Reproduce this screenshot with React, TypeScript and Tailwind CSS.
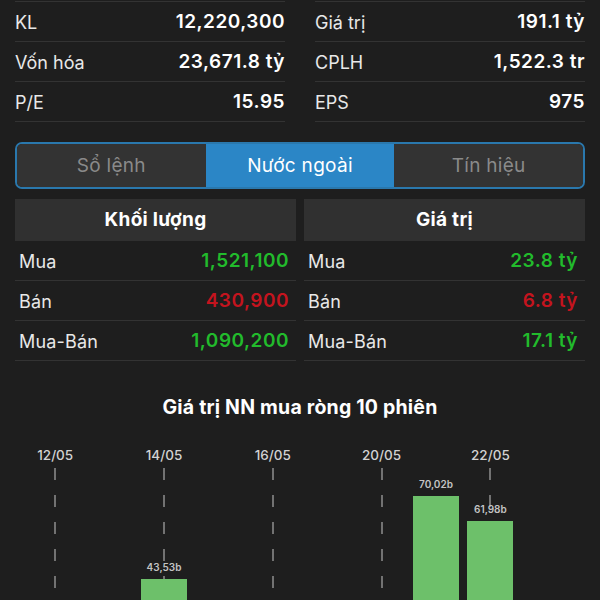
import React from "react";

const STATS: [string, string][][] = [
  [
    ["KL", "12,220,300"],
    ["Vốn hóa", "23,671.8 tỷ"],
    ["P/E", "15.95"],
  ],
  [
    ["Giá trị", "191.1 tỷ"],
    ["CPLH", "1,522.3 tr"],
    ["EPS", "975"],
  ],
];

const TABS = ["Sổ lệnh", "Nước ngoài", "Tín hiệu"];

type Row = { label: string; value: string; tone: "up" | "down" };

const VOLUME: Row[] = [
  { label: "Mua", value: "1,521,100", tone: "up" },
  { label: "Bán", value: "430,900", tone: "down" },
  { label: "Mua-Bán", value: "1,090,200", tone: "up" },
];

const VALUE: Row[] = [
  { label: "Mua", value: "23.8 tỷ", tone: "up" },
  { label: "Bán", value: "6.8 tỷ", tone: "down" },
  { label: "Mua-Bán", value: "17.1 tỷ", tone: "up" },
];

// 10 sessions, net foreign buy value (billion); null = bar sits below the fold
const SESSIONS: { date: string; value: number | null; grid: boolean }[] = [
  { date: "12/05", value: null, grid: true },
  { date: "13/05", value: null, grid: false },
  { date: "14/05", value: 43.53, grid: true },
  { date: "15/05", value: null, grid: false },
  { date: "16/05", value: null, grid: true },
  { date: "19/05", value: null, grid: false },
  { date: "20/05", value: null, grid: true },
  { date: "21/05", value: 70.02, grid: false },
  { date: "22/05", value: 61.98, grid: true },
  { date: "23/05", value: null, grid: false },
];

const PX_PER_B = 3.14;

function StatColumn({ rows }: { rows: [string, string][] }) {
  return (
    <div className="border-t border-[#333333]">
      {rows.map(([label, value]) => (
        <div
          key={label}
          className="h-[40px] pt-[2px] flex items-center justify-between border-b border-[#333333]"
        >
          <span className="text-[18px] text-[#e8e8e8]">{label}</span>
          <span className="text-[19px] font-semibold text-white tracking-[0.5px]">{value}</span>
        </div>
      ))}
    </div>
  );
}

function FlowTable({ title, rows }: { title: string; rows: Row[] }) {
  return (
    <div>
      <div className="h-[42px] flex items-center justify-center bg-[#303030] text-[19px] font-bold text-white tracking-[0.3px]">
        {title}
      </div>
      {rows.map((r) => (
        <div
          key={r.label}
          className="h-[40px] pt-[2px] flex items-center justify-between pl-[4px] pr-[7px] border-b border-[#333333]"
        >
          <span className="text-[18px] text-[#e8e8e8] tracking-[0.2px]">{r.label}</span>
          <span
            className={`text-[19px] font-semibold tracking-[0.5px] ${
              r.tone === "up" ? "text-[#22bb2c]" : "text-[#c4141e]"
            }`}
          >
            {r.value}
          </span>
        </div>
      ))}
    </div>
  );
}

export default function App() {
  return (
    <div
      className="w-[600px] h-[600px] overflow-hidden bg-[#1e1e1e] pt-[1px]"
      style={{ fontFamily: "Inter, 'Noto Sans', sans-serif" }}
    >
      <div className="grid grid-cols-2 gap-x-[30px] px-[15px]">
        <StatColumn rows={STATS[0]} />
        <StatColumn rows={STATS[1]} />
      </div>

      <div className="mx-[15px] mt-[20px] h-[47px] grid grid-cols-3 rounded-[7px] border-2 border-[#2a78ad] overflow-hidden">
        {TABS.map((t, i) => (
          <div
            key={t}
            className={`flex items-center justify-center pt-[2px] text-[19px] tracking-[0.3px] ${
              i === 1 ? "bg-[#2b86c6] text-white" : "bg-[#333333] text-[#8a8a8a]"
            }`}
          >
            {t}
          </div>
        ))}
      </div>

      <div className="grid grid-cols-2 gap-x-[8px] px-[15px] mt-[10px]">
        <FlowTable title="Khối lượng" rows={VOLUME} />
        <FlowTable title="Giá trị" rows={VALUE} />
      </div>

      <div className="mt-[33px] text-center text-[19.5px] font-bold text-white leading-[26px] tracking-[0.2px]">
        Giá trị NN mua ròng 10 phiên
      </div>

      <div className="mx-[28px] mt-[26px] grid grid-cols-10">
        {SESSIONS.map((s) => (
          <div key={s.date} className="flex flex-col items-center">
            <div className="h-[18px] text-[13.5px] font-medium leading-[18px] text-[#d2d2d2]">
              {s.grid ? s.date : ""}
            </div>
            <div className="relative mt-[4px] h-[132px] w-full flex flex-col items-center justify-end">
              {s.grid && (
                <div className="absolute top-0 bottom-0 left-1/2 -ml-px w-[2px] bg-[repeating-linear-gradient(to_bottom,#727272_0_12px,transparent_12px_27px)]" />
              )}
              {s.value !== null && (
                <>
                  <div className="relative text-[10px] font-semibold leading-[12px] text-[#c4c4c4] mb-[6px]">
                    {s.value.toFixed(2).replace(".", ",")}b
                  </div>
                  {/* bar runs on past the bottom edge; baseline sits below the fold */}
                  <div
                    className="relative w-[46px] bg-[#6dc06a] -mb-[116px]"
                    style={{ height: s.value * PX_PER_B }}
                  />
                </>
              )}
            </div>
          </div>
        ))}
      </div>
    </div>
  );
}
